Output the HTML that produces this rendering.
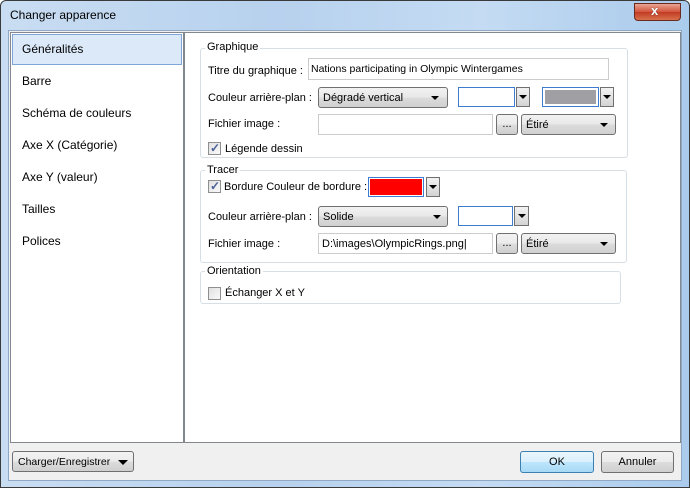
<!DOCTYPE html>
<html><head><meta charset="utf-8"><style>
*{box-sizing:border-box;margin:0;padding:0}
body{width:690px;height:488px;position:relative;overflow:hidden;font-family:"Liberation Sans",sans-serif;font-size:11px;color:#000;background:#fff}
.a{position:absolute}
.frame{left:0;top:0;width:690px;height:488px;border:1px solid #3a3a3a;background:linear-gradient(90deg,#c9ddf2,#b7d1ee 40%,#c4dbf3 70%,#aacbec);border-radius:6px 6px 0 0}
.client{left:8px;top:30px;width:674px;height:451px;background:#f0f0f0;border:1px solid #8fa8c4}
.t{white-space:nowrap;line-height:13px}
.box{background:#fff;border:1px solid #aaa}
.grp{border:1px solid #d5dfe5;border-radius:3px}
.lbl{background:#fff;padding:0 2px}
.cmb{border:1px solid #707070;border-radius:3px;background:linear-gradient(#f2f2f2,#e8e8e8 50%,#dcdcdc 50%,#d0d0d0);padding:4px 4px}
.arr{width:0;height:0;border-left:4px solid transparent;border-right:4px solid transparent;border-top:4px solid #000}
.cb{width:13px;height:13px;border:1px solid #8e8f8f;background:linear-gradient(135deg,#e0e0e0,#fafafa)}
.cb.on::after{content:"✓";position:absolute;left:1px;top:-2px;font-size:12px;color:#4a5f97;font-weight:bold}
.btn{border:1px solid #707070;border-radius:3px;background:linear-gradient(#f2f2f2,#ebebeb 50%,#dddddd 50%,#cfcfcf);text-align:center}
.dd{border:1px solid #707070;background:linear-gradient(#f2f2f2,#d4d4d4)}
.item{left:22px}
</style></head><body>
<div class="a frame"></div>
<div class="a t" style="left:10px;top:9px;font-size:12px">Changer apparence</div>
<div class="a" style="left:634px;top:3px;width:47px;height:18px;border:1px solid #6b2a20;border-radius:0 0 4px 4px;background:linear-gradient(#e8a593,#d3533c 50%,#c23a22 50%,#d7724c)"></div>
<div class="a t" style="left:651px;top:4px;color:#fff;font-weight:bold;font-size:13px;text-shadow:0 0 1px #333">x</div>
<div class="a client"></div>
<div class="a box" style="left:10px;top:32px;width:174px;height:411px;border-color:#828790"></div>
<div class="a box" style="left:184px;top:32px;width:497px;height:411px;border-color:#828790"></div>
<div class="a" style="left:12px;top:34px;width:170px;height:31px;background:#dbe9f9;border:1px solid #7ea6d6"></div>
<div class="a t item" style="top:43px;font-size:12px">Généralités</div>
<div class="a t item" style="top:75px;font-size:12px">Barre</div>
<div class="a t item" style="top:107px;font-size:12px">Schéma de couleurs</div>
<div class="a t item" style="top:139px;font-size:12px">Axe X (Catégorie)</div>
<div class="a t item" style="top:171px;font-size:12px">Axe Y (valeur)</div>
<div class="a t item" style="top:203px;font-size:12px">Tailles</div>
<div class="a t item" style="top:235px;font-size:12px">Polices</div>

<!-- Graphique -->
<div class="a grp" style="left:200px;top:48px;width:428px;height:110px"></div>
<div class="a t lbl" style="left:205px;top:41px;font-size:11px">Graphique</div>
<div class="a t" style="left:208px;top:65px">Titre du graphique :</div>
<div class="a box" style="left:308px;top:58px;width:301px;height:22px;border-color:#ccc"></div>
<div class="a t" style="left:311px;top:63px;font-size:10.5px">Nations participating in Olympic Wintergames</div>
<div class="a t" style="left:208px;top:92px">Couleur arrière-plan :</div>
<div class="a cmb" style="left:318px;top:87px;width:130px;height:21px"><span class="t">Dégradé vertical</span></div>
<div class="a arr" style="left:431px;top:96px"></div>
<div class="a box" style="left:458px;top:87px;width:57px;height:20px;border-color:#3d7bd1"></div>
<div class="a dd" style="left:516px;top:87px;width:14px;height:20px"></div><div class="a arr" style="left:519px;top:95px"></div>
<div class="a" style="left:542px;top:87px;width:57px;height:20px;border:1px solid #3d7bd1;background:#a0a0a4;box-shadow:inset 0 0 0 2px #fff"></div>
<div class="a dd" style="left:600px;top:87px;width:14px;height:20px"></div><div class="a arr" style="left:603px;top:95px"></div>
<div class="a t" style="left:208px;top:118px">Fichier image :</div>
<div class="a box" style="left:318px;top:114px;width:175px;height:21px;border-color:#ccc"></div>
<div class="a btn" style="left:496px;top:114px;width:22px;height:21px"><span class="t" style="position:relative;top:3px">...</span></div>
<div class="a cmb" style="left:521px;top:114px;width:95px;height:21px"><span class="t">Étiré</span></div>
<div class="a arr" style="left:600px;top:123px"></div>
<div class="a cb on" style="left:208px;top:142px"></div>
<div class="a t" style="left:225px;top:143px">Légende dessin</div>

<!-- Tracer -->
<div class="a grp" style="left:200px;top:170px;width:427px;height:93px"></div>
<div class="a t lbl" style="left:205px;top:164px">Tracer</div>
<div class="a cb on" style="left:208px;top:180px"></div>
<div class="a t" style="left:224px;top:181px">Bordure Couleur de bordure :</div>
<div class="a" style="left:368px;top:177px;width:56px;height:20px;border:1px solid #3d7bd1;background:#ff0000;box-shadow:inset 0 0 0 1px #fff"></div>
<div class="a dd" style="left:426px;top:177px;width:14px;height:20px"></div><div class="a arr" style="left:429px;top:185px"></div>
<div class="a t" style="left:208px;top:211px">Couleur arrière-plan :</div>
<div class="a cmb" style="left:318px;top:206px;width:130px;height:21px"><span class="t">Solide</span></div>
<div class="a arr" style="left:433px;top:215px"></div>
<div class="a box" style="left:458px;top:206px;width:55px;height:20px;border-color:#3d7bd1"></div>
<div class="a dd" style="left:514px;top:206px;width:15px;height:20px"></div><div class="a arr" style="left:518px;top:214px"></div>
<div class="a t" style="left:208px;top:238px">Fichier image :</div>
<div class="a box" style="left:318px;top:233px;width:175px;height:21px;border-color:#ccc"></div>
<div class="a t" style="left:322px;top:238px">D:\images\OlympicRings.png|</div>
<div class="a btn" style="left:496px;top:233px;width:22px;height:21px"><span class="t" style="position:relative;top:3px">...</span></div>
<div class="a cmb" style="left:521px;top:233px;width:95px;height:21px"><span class="t">Étiré</span></div>
<div class="a arr" style="left:600px;top:242px"></div>

<!-- Orientation -->
<div class="a grp" style="left:200px;top:271px;width:421px;height:33px"></div>
<div class="a t lbl" style="left:205px;top:265px">Orientation</div>
<div class="a cb" style="left:208px;top:287px"></div>
<div class="a t" style="left:225px;top:287px">Échanger X et Y</div>

<!-- bottom -->
<div class="a btn" style="left:12px;top:451px;width:122px;height:21px"></div>
<div class="a t" style="left:18px;top:456px;font-size:10.5px">Charger/Enregistrer</div>
<div class="a arr" style="left:118px;top:460px;border-left-width:5px;border-right-width:5px;border-top-width:5px"></div>
<div class="a btn" style="left:520px;top:451px;width:74px;height:22px;border-color:#3c7fb1;background:linear-gradient(#eaf6fd,#d9f0fc 50%,#bee6fd 50%,#a7d9f5)"><span class="t" style="position:relative;top:4px">OK</span></div>
<div class="a btn" style="left:601px;top:451px;width:73px;height:22px"><span class="t" style="position:relative;top:4px">Annuler</span></div>
</body></html>
